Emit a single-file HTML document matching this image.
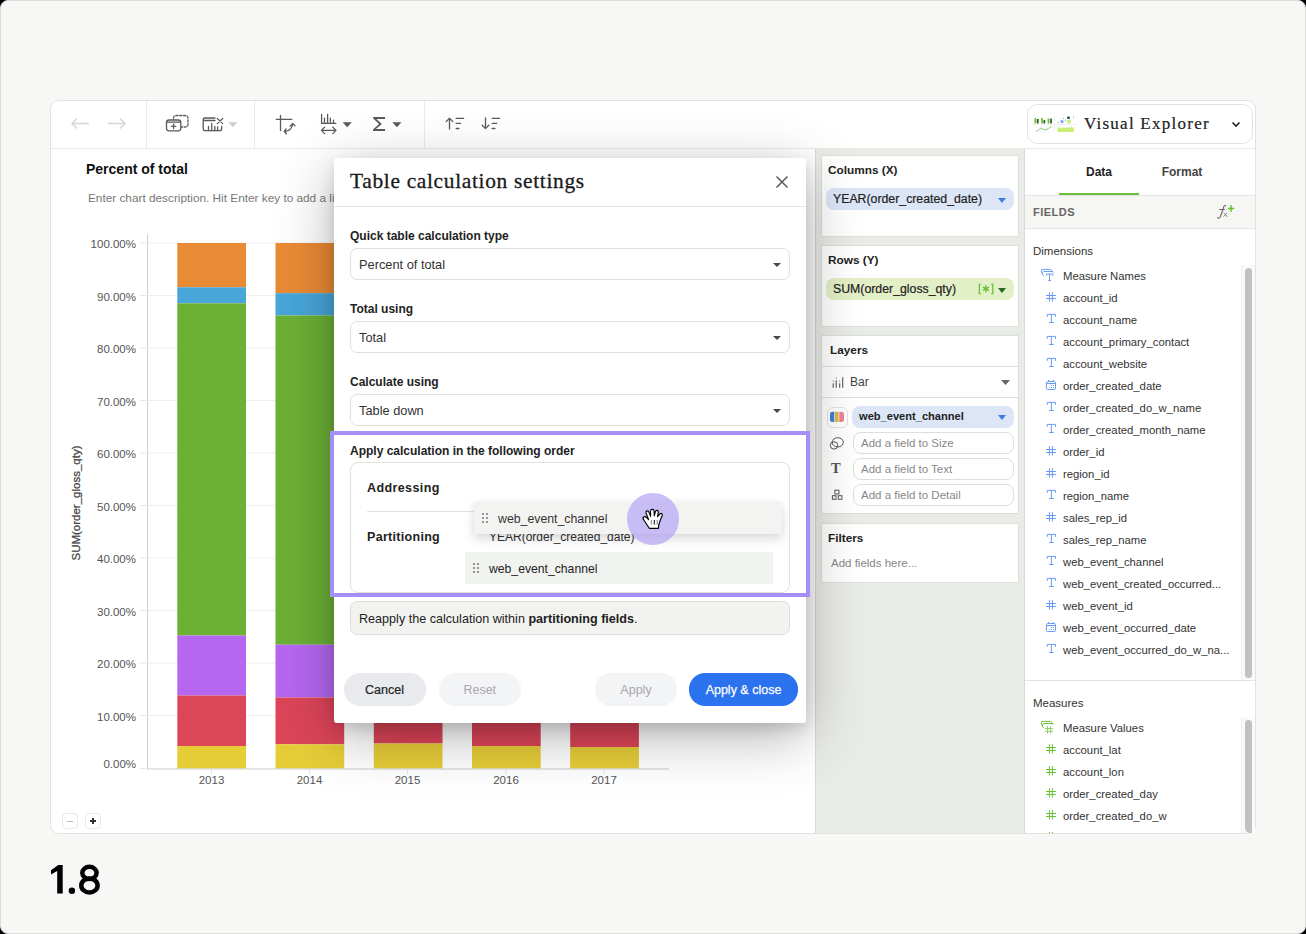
<!DOCTYPE html>
<html><head><meta charset="utf-8">
<style>
*{box-sizing:border-box;margin:0;padding:0}
html,body{width:1306px;height:934px;overflow:hidden;background:#000;font-family:"Liberation Sans",sans-serif;color:#222}
.a{position:absolute}
.t{position:absolute;white-space:nowrap;line-height:1}
#frame{position:absolute;left:0;top:0;width:1306px;height:934px;background:#f7f7f5;border:1px solid #dcdedb;border-radius:8px;overflow:hidden}
svg{position:absolute;overflow:visible}
.tri{position:absolute;width:0;height:0;border-left:4.5px solid transparent;border-right:4.5px solid transparent;border-top:5px solid #555}
.dim{font-size:11.3px;color:#333}
.ic{position:absolute;left:1046px}
</style></head><body>
<div id="frame"></div>

<!-- APP WINDOW -->
<div class="a" style="left:50px;top:100px;width:1206px;height:734px;background:#fff;border:1px solid #e1e3e0;border-radius:9px"></div>
<!-- toolbar bottom border -->
<div class="a" style="left:51px;top:148px;width:1204px;height:1px;background:#e8eae6"></div>
<div class="a" style="left:146px;top:101px;width:1px;height:47px;background:#e8eae6"></div>
<div class="a" style="left:254px;top:101px;width:1px;height:47px;background:#e8eae6"></div>
<div class="a" style="left:424px;top:101px;width:1px;height:47px;background:#e8eae6"></div>

<!-- shelf panel -->
<div class="a" style="left:815px;top:149px;width:210px;height:684px;background:#e9ebe6;border-left:1px solid #d8dad5;border-right:1px solid #d8dad5"></div>

<!-- toolbar icons -->
<svg style="left:0;top:0" width="1306" height="150" viewBox="0 0 1306 150" fill="none" stroke-linecap="round" stroke-linejoin="round">
  <g stroke="#d6d6d4" stroke-width="1.6">
    <path d="M72.5 123.5H88.5M76.5 119L72 123.5L76.5 128"/>
    <path d="M108.5 123.5H124.5M120.5 119L125 123.5L120.5 128"/>
  </g>
  <g stroke="#5a5a5a" stroke-width="1.3">
    <path d="M173.5 122V118.5Q173.5 115.5 176.5 115.5H185Q188 115.5 188 118.5V124Q188 127 185 127H181" stroke-dasharray="2.2 1.6"/>
    <rect x="166.5" y="120" width="14.3" height="10.8" rx="2.5" fill="#fff"/>
    <path d="M167 122.2H180.5M173.6 124V128.5M171.3 126.3H175.9"/>
    <path d="M215 118H204.5Q203.2 118 203.2 120.5V128.5Q203.2 130.7 205.5 130.7H219.5Q221.7 130.7 221.7 128.5V126.3"/>
    <path d="M204 120.5H215M208.5 126.5V130.5M211.7 123.5V130.5M214.8 126.5V130.5M217.6 127V130.5"/>
    <path d="M217.3 118.5L222.7 123.6M222.7 118.5L217.3 123.6"/>
    <path d="M280.5 115.5V130.5M276.2 119.3H291.8"/>
    <path d="M284.6 131.5Q291.8 131 292.6 123.8M290.2 126.1L292.6 123.6L294.9 125.7M286.2 128.9L284.3 131.5L286.4 133.8"/>
    <path d="M321.6 114.3V123.4H335.8M324.5 118.2V123.4M327.6 114.3V123.4M330.4 118.2V123.4M333.5 120.2V123.4"/>
    <path d="M321.5 130.4H335.8M324.6 127.2L321.4 130.4L324.6 133.6M332.8 127.2L336 130.4L332.8 133.6"/>
  </g>
  <path d="M373.2 117.1H385.1V118.9H376.4L381.9 124L375.9 129.1H385.1V130.9H373V129.5L379.1 124L373.2 118.6Z" fill="#5a5a5a"/>
  <path d="M228.3 122.2H237.5L232.9 127.2Z" fill="#cdcdcd"/>
  <path d="M342.6 122.2H351.8L347.2 127.2Z" fill="#5a5a5a"/>
  <path d="M392.3 122.2H401.5L396.9 127.2Z" fill="#5a5a5a"/>
  <g stroke="#5a5a5a" stroke-width="1.3">
    <path d="M449.5 129V118.3M446.2 121.6L449.5 118.2L452.8 121.6"/>
    <path d="M456.2 118.4H463.6M456.2 123.4H460.6M456.2 128.5H458.9"/>
    <path d="M485.5 118V128.6M482.2 125.3L485.5 128.6L488.8 125.3"/>
    <path d="M492.2 118.4H499.6M492.2 123.4H496.6M492.2 128.5H494.9"/>
  </g>
</svg>
<!-- Visual Explorer -->
<div class="a" style="left:1027px;top:104px;width:226px;height:40px;border:1px solid #e3e4e0;border-radius:10px;background:#fff"></div>
<svg style="left:0;top:0" width="1306" height="150" viewBox="0 0 1306 150">
  <g fill="#6cc02a"><rect x="1034.5" y="118" width="1.8" height="5.6" rx="0.5"/><rect x="1041.2" y="118" width="1.8" height="5.6" rx="0.5"/><rect x="1047.6" y="118.6" width="1.8" height="5" rx="0.5"/></g>
  <g fill="#1d5a2a"><rect x="1036.9" y="119" width="1.7" height="4.6" rx="0.5"/><rect x="1043.5" y="120" width="1.7" height="3.6" rx="0.5"/><rect x="1050.2" y="118.6" width="1.7" height="5" rx="0.5"/></g>
  <path d="M1032 124.7H1077" stroke="#ececec" stroke-width="0.9"/>
  <path d="M1054.5 116V132" stroke="#ededed" stroke-width="0.8"/>
  <path d="M1036 131.5L1041.3 128.3L1043.8 129.5L1046 129.8L1051.5 126.6" stroke="#79c043" stroke-width="0.9" fill="none"/>
  <path d="M1037 131.8L1041.3 126.5L1045.8 131.6L1051 126" stroke="#cfe0fb" stroke-width="0.6" fill="none"/>
  <g fill="#6f9ef0"><circle cx="1062" cy="121.5" r="1.5"/><circle cx="1058.5" cy="122.5" r="0.6"/><circle cx="1063.5" cy="118.3" r="0.6"/><circle cx="1065.5" cy="120.2" r="0.6"/><circle cx="1073.5" cy="117.2" r="0.6"/></g>
  <rect x="1067.2" y="116.6" width="2.6" height="2.4" rx="0.5" fill="#1d5a2a"/>
  <rect x="1067.2" y="120" width="3.6" height="3.4" rx="0.8" fill="#c8ef74"/>
  <path d="M1057.5 132V127.5L1058.3 126.8L1059 128.5L1060 127L1061 128.5L1062 127.2L1062.8 128.2L1063.8 127L1064.8 128.6L1065.8 126.9L1066.8 128.4L1067.8 127.1L1068.7 128.3L1069.7 126.8L1070.7 127.8L1071.7 126.6L1072.7 127.9L1074 127V132Z" fill="#c8ef74"/>
  <path d="M1232.5 122.5L1236 126L1239.5 122.5" stroke="#222" stroke-width="1.6" fill="none"/>
</svg>
<div class="t" style="left:1084px;top:114.7px;font-family:'Liberation Serif',serif;font-size:17px;color:#222;letter-spacing:1.25px;-webkit-text-stroke:0.2px #222">Visual Explorer</div>

<!-- CHART -->
<div class="t" style="left:86px;top:162px;font-size:14px;font-weight:bold;color:#111">Percent of total</div>
<div class="t" style="left:88px;top:193px;font-size:11.8px;color:#777">Enter chart description. Hit Enter key to add a line break.</div>
<svg style="left:0;top:0" width="1306" height="850" viewBox="0 0 1306 850">
  <g stroke="#efefef" stroke-width="1">
    <path d="M148 243H668M148 295.5H668M148 348H668M148 400.5H668M148 453H668M148 505.5H668M148 558H668M148 610.5H668M148 663H668M148 715.5H668"/>
  </g>
  <g stroke="#e4e4e4" stroke-width="1">
    <path d="M140 243H146M140 295.5H146M140 348H146M140 400.5H146M140 453H146M140 505.5H146M140 558H146M140 610.5H146M140 663H146M140 715.5H146M140 768.5H146"/>
  </g>
  <path d="M147.5 234V769" stroke="#d0d0d0" stroke-width="1"/>
  <g>
    <!-- 2013 -->
    <rect x="177.3" y="243" width="68.7" height="44.3" fill="#e98b35"/>
    <rect x="177.3" y="287.3" width="68.7" height="16" fill="#48a6d9"/>
    <rect x="177.3" y="303.3" width="68.7" height="332.2" fill="#6cb036"/>
    <rect x="177.3" y="635.5" width="68.7" height="60" fill="#b667f1"/>
    <rect x="177.3" y="695.5" width="68.7" height="50.5" fill="#dd4559"/>
    <rect x="177.3" y="746" width="68.7" height="22.5" fill="#e6cd38"/>
    <!-- 2014 -->
    <rect x="275.5" y="243" width="68.7" height="50.2" fill="#e98b35"/>
    <rect x="275.5" y="293.2" width="68.7" height="22.3" fill="#48a6d9"/>
    <rect x="275.5" y="315.5" width="68.7" height="329.2" fill="#6cb036"/>
    <rect x="275.5" y="644.7" width="68.7" height="52.8" fill="#b667f1"/>
    <rect x="275.5" y="697.5" width="68.7" height="46.8" fill="#dd4559"/>
    <rect x="275.5" y="744.3" width="68.7" height="24.2" fill="#e6cd38"/>
    <!-- 2015 -->
    <rect x="373.8" y="243" width="68.7" height="400" fill="#e98b35"/>
    <rect x="373.8" y="640" width="68.7" height="103.5" fill="#dd4559"/>
    <rect x="373.8" y="743.5" width="68.7" height="25" fill="#e6cd38"/>
    <!-- 2016 -->
    <rect x="472" y="243" width="68.7" height="400" fill="#e98b35"/>
    <rect x="472" y="640" width="68.7" height="106" fill="#dd4559"/>
    <rect x="472" y="746" width="68.7" height="22.5" fill="#e6cd38"/>
    <!-- 2017 -->
    <rect x="570.2" y="243" width="68.7" height="400" fill="#e98b35"/>
    <rect x="570.2" y="640" width="68.7" height="107" fill="#dd4559"/>
    <rect x="570.2" y="747" width="68.7" height="21.5" fill="#e6cd38"/>
  </g>
  <path d="M147 769H669" stroke="#cccccc" stroke-width="1.2"/>
  <g stroke="#e6e6e6" stroke-width="1"><path d="M211.5 770V775M309.5 770V775M407.5 770V775M506 770V775M604 770V775"/></g>
</svg>
<div class="t" style="left:0;top:238px;width:136px;text-align:right;font-size:11.5px;color:#555;line-height:12px">100.00%</div>
<div class="t" style="left:0;top:290.5px;width:136px;text-align:right;font-size:11.5px;color:#555;line-height:12px">90.00%</div>
<div class="t" style="left:0;top:343px;width:136px;text-align:right;font-size:11.5px;color:#555;line-height:12px">80.00%</div>
<div class="t" style="left:0;top:395.5px;width:136px;text-align:right;font-size:11.5px;color:#555;line-height:12px">70.00%</div>
<div class="t" style="left:0;top:448px;width:136px;text-align:right;font-size:11.5px;color:#555;line-height:12px">60.00%</div>
<div class="t" style="left:0;top:500.5px;width:136px;text-align:right;font-size:11.5px;color:#555;line-height:12px">50.00%</div>
<div class="t" style="left:0;top:553px;width:136px;text-align:right;font-size:11.5px;color:#555;line-height:12px">40.00%</div>
<div class="t" style="left:0;top:605.5px;width:136px;text-align:right;font-size:11.5px;color:#555;line-height:12px">30.00%</div>
<div class="t" style="left:0;top:658px;width:136px;text-align:right;font-size:11.5px;color:#555;line-height:12px">20.00%</div>
<div class="t" style="left:0;top:710.5px;width:136px;text-align:right;font-size:11.5px;color:#555;line-height:12px">10.00%</div>
<div class="t" style="left:0;top:758px;width:136px;text-align:right;font-size:11.5px;color:#555;line-height:12px">0.00%</div>
<div class="t" style="left:161.5px;top:774px;width:100px;text-align:center;font-size:11.5px;color:#555;line-height:12px">2013</div>
<div class="t" style="left:259.5px;top:774px;width:100px;text-align:center;font-size:11.5px;color:#555;line-height:12px">2014</div>
<div class="t" style="left:357.5px;top:774px;width:100px;text-align:center;font-size:11.5px;color:#555;line-height:12px">2015</div>
<div class="t" style="left:456px;top:774px;width:100px;text-align:center;font-size:11.5px;color:#555;line-height:12px">2016</div>
<div class="t" style="left:554px;top:774px;width:100px;text-align:center;font-size:11.5px;color:#555;line-height:12px">2017</div>
<div class="t" style="left:6px;top:497px;width:140px;text-align:center;font-size:11.5px;color:#444;line-height:12px;transform:rotate(-90deg);font-weight:normal;-webkit-text-stroke:0.25px #444">SUM(order_gloss_qty)</div>
<!-- zoom buttons -->
<div class="a" style="left:62px;top:813px;width:16px;height:16px;border:1px solid #e9ebe7;border-radius:4px;background:#fff"></div>
<div class="a" style="left:67px;top:820.5px;width:6px;height:1.3px;background:#bbb"></div>
<div class="a" style="left:85px;top:813px;width:16px;height:16px;border:1px solid #e9ebe7;border-radius:4px;background:#fff"></div>
<div class="a" style="left:90px;top:820.3px;width:6px;height:2px;background:#333"></div>
<div class="a" style="left:92px;top:818.3px;width:2px;height:6px;background:#333"></div>

<div id="chartlayer"></div>
<!-- SHELF -->
<div class="a" style="left:821px;top:155px;width:198px;height:82px;background:#fff;border:1px solid #dddfda"></div>
<div class="t" style="left:828px;top:165px;font-size:11.8px;font-weight:bold;color:#222">Columns (X)</div>
<div class="a" style="left:826px;top:188px;width:188px;height:22px;background:#dce6f7;border-radius:8px"></div>
<div class="t" style="left:833px;top:193px;font-size:12.3px;color:#222;-webkit-text-stroke:0.2px #222">YEAR(order_created_date)</div>
<div class="tri" style="left:997.5px;top:197.5px;border-top-color:#3f7ddb"></div>

<div class="a" style="left:821px;top:245px;width:198px;height:82px;background:#fff;border:1px solid #dddfda"></div>
<div class="t" style="left:828px;top:255px;font-size:11.8px;font-weight:bold;color:#222">Rows (Y)</div>
<div class="a" style="left:826px;top:278px;width:188px;height:22px;background:#e3efc6;border-radius:8px"></div>
<div class="t" style="left:833px;top:283px;font-size:12.3px;color:#222;-webkit-text-stroke:0.2px #222">SUM(order_gloss_qty)</div>
<svg style="left:0;top:0" width="1306" height="400" viewBox="0 0 1306 400" fill="none" stroke="#62c02e"><path d="M980.8 284.3H979.3V293.6H980.8M991.3 284.3H992.8V293.6H991.3" stroke-width="1.2"/><path d="M985.9 285.2V292.2M982.9 287L988.9 290.4M988.9 287L982.9 290.4" stroke-width="1.4"/></svg>
<div class="tri" style="left:998px;top:287.5px;border-top-color:#236b25"></div>

<div class="a" style="left:821px;top:335px;width:198px;height:179px;background:#fff;border:1px solid #dddfda"></div>
<div class="t" style="left:830px;top:345px;font-size:11.8px;font-weight:bold;color:#222">Layers</div>
<div class="a" style="left:822px;top:366px;width:196px;height:1px;background:#dddfda"></div>
<svg style="left:0;top:0" width="1306" height="600" viewBox="0 0 1306 600" fill="none">
  <g stroke="#555" stroke-width="1.1"><path d="M833.2 383.3V387.8M836.2 380.3V387.8M839.7 383.3V387.8M842.7 377.3V387.8"/></g>
  <g fill="#555"><circle cx="833.2" cy="381" r="0.6"/><circle cx="836.2" cy="378" r="0.6"/><circle cx="839.7" cy="381" r="0.6"/></g>
  <path d="M1001 380H1010L1005.5 385Z" fill="#666"/>
</svg>
<div class="t" style="left:850px;top:376px;font-size:12px;color:#444">Bar</div><div class="t" style="left:831px;top:461px;font-family:'Liberation Serif',serif;font-weight:bold;font-size:14.5px;color:#555">T</div>
<div class="a" style="left:822px;top:397px;width:196px;height:1px;background:#dddfda"></div>
<!-- color icon -->
<div class="a" style="left:827px;top:407px;width:21px;height:21px;border:1px solid #e3e3e0;border-radius:6px;background:#fff"></div>
<svg style="left:0;top:0" width="1306" height="600" viewBox="0 0 1306 600">
  <path d="M832.5 411.8H834.3V422H832.5Q830 422 830 419.5V414.3Q830 411.8 832.5 411.8Z" fill="#3f7ddb"/>
  <rect x="835" y="411.8" width="3.6" height="10.2" fill="#dfb93e"/>
  <path d="M839.3 411.8H841.5Q844 411.8 844 414.3V419.5Q844 422 841.5 422H839.3Z" fill="#f0829a"/>
</svg>
<div class="a" style="left:852px;top:406px;width:162px;height:21.5px;background:#dce6f7;border-radius:8px"></div>
<div class="t" style="left:859px;top:411px;font-size:11.1px;font-weight:bold;color:#222">web_event_channel</div>
<div class="tri" style="left:997.5px;top:415px;border-top-color:#3f7ddb"></div>
<!-- size/text/detail -->
<div class="a" style="left:852.5px;top:432px;width:161.5px;height:21.5px;border:1px solid #dedfdc;border-radius:8px;background:#fff"></div>
<div class="t" style="left:861px;top:438px;font-size:11.5px;color:#888">Add a field to Size</div>
<div class="a" style="left:852.5px;top:458px;width:161.5px;height:21.5px;border:1px solid #dedfdc;border-radius:8px;background:#fff"></div>
<div class="t" style="left:861px;top:464px;font-size:11.5px;color:#888">Add a field to Text</div>
<div class="a" style="left:852.5px;top:484px;width:161.5px;height:21.5px;border:1px solid #dedfdc;border-radius:8px;background:#fff"></div>
<div class="t" style="left:861px;top:490px;font-size:11.5px;color:#888">Add a field to Detail</div>
<svg style="left:0;top:0" width="1306" height="600" viewBox="0 0 1306 600" fill="none" stroke="#555" stroke-width="1">
  <ellipse cx="837.7" cy="442.3" rx="5.6" ry="4.6"/>
  <circle cx="834" cy="445.4" r="3.7"/>
  <rect x="834.9" y="490.2" width="4" height="3.8"/><rect x="832.4" y="495.7" width="3.6" height="3.6"/><rect x="838.3" y="495.7" width="3.6" height="3.6"/>
</svg>

<div class="a" style="left:821px;top:523px;width:198px;height:60px;background:#fff;border:1px solid #dddfda"></div>
<div class="t" style="left:828px;top:532.5px;font-size:11.8px;font-weight:bold;color:#222">Filters</div>
<div class="t" style="left:831px;top:558px;font-size:11.5px;color:#888">Add fields here...</div>

<div id="shelflayer"></div>
<!-- DATA PANEL -->
<div class="t" style="left:1060px;top:165.5px;width:78px;text-align:center;font-size:12px;font-weight:bold;color:#222">Data</div>
<div class="t" style="left:1142px;top:165.5px;width:80px;text-align:center;font-size:12px;font-weight:bold;color:#444">Format</div>
<div class="a" style="left:1059px;top:192.5px;width:80px;height:2px;background:#6cbf3a"></div>
<div class="a" style="left:1025px;top:194.5px;width:230px;height:34px;background:#f6f6f4;border-top:1px solid #e6e7e3;border-bottom:1px solid #e6e7e3"></div>
<div class="t" style="left:1033px;top:207px;font-size:11px;font-weight:bold;color:#666;letter-spacing:0.5px">FIELDS</div>

<svg style="left:0;top:0" width="1306" height="850" viewBox="0 0 1306 850" fill="none">
  <path d="M1231 205.2V211.8M1227.8 208.5H1234.3" stroke="#62bf2e" stroke-width="1.5"/>
  <path d="M1217.4 217.2Q1218.6 219.3 1220.3 217L1223.9 206.5Q1224.8 204.8 1226.1 206" stroke="#666" stroke-width="1.1"/>
  <path d="M1219.4 209.5H1224.8" stroke="#666" stroke-width="1"/>
  <path d="M1223.6 212.7L1227.6 216.9M1227 212.9L1223.6 216.6" stroke="#777" stroke-width="0.9"/>
</svg>
<div class="t" style="left:1033px;top:245.5px;font-size:11.5px;color:#333">Dimensions</div>
<!-- dims list -->
<div class="a" style="left:1241px;top:265px;width:14px;height:416px;background:#fafafa;border-left:1px solid #efefef"></div>
<div class="a" style="left:1245px;top:268px;width:7px;height:410px;background:#c1c1c1;border-radius:4px"></div>
<div class="t dim" style="left:1063px;top:270.5px">Measure Names</div>
<div class="t dim" style="left:1063px;top:292.5px">account_id</div>
<div class="t dim" style="left:1063px;top:314.5px">account_name</div>
<div class="t dim" style="left:1063px;top:336.5px">account_primary_contact</div>
<div class="t dim" style="left:1063px;top:358.5px">account_website</div>
<div class="t dim" style="left:1063px;top:380.5px">order_created_date</div>
<div class="t dim" style="left:1063px;top:402.5px">order_created_do_w_name</div>
<div class="t dim" style="left:1063px;top:424.5px">order_created_month_name</div>
<div class="t dim" style="left:1063px;top:446.5px">order_id</div>
<div class="t dim" style="left:1063px;top:468.5px">region_id</div>
<div class="t dim" style="left:1063px;top:490.5px">region_name</div>
<div class="t dim" style="left:1063px;top:512.5px">sales_rep_id</div>
<div class="t dim" style="left:1063px;top:534.5px">sales_rep_name</div>
<div class="t dim" style="left:1063px;top:556.5px">web_event_channel</div>
<div class="t dim" style="left:1063px;top:578.5px">web_event_created_occurred...</div>
<div class="t dim" style="left:1063px;top:600.5px">web_event_id</div>
<div class="t dim" style="left:1063px;top:622.5px">web_event_occurred_date</div>
<div class="t dim" style="left:1063px;top:644.5px">web_event_occurred_do_w_na...</div>
<div class="a" style="left:1025px;top:680px;width:230px;height:1px;background:#e3e4e0"></div>
<div class="t" style="left:1033px;top:697.5px;font-size:11.5px;color:#333">Measures</div>
<div class="a" style="left:1241px;top:717px;width:14px;height:116px;background:#fafafa;border-left:1px solid #efefef"></div>
<div class="a" style="left:1245px;top:720px;width:7px;height:113px;background:#c1c1c1;border-radius:4px 4px 0 6px"></div>
<div class="t dim" style="left:1063px;top:722.5px">Measure Values</div>
<div class="t dim" style="left:1063px;top:744.5px">account_lat</div>
<div class="t dim" style="left:1063px;top:766.5px">account_lon</div>
<div class="t dim" style="left:1063px;top:788.5px">order_created_day</div>
<div class="t dim" style="left:1063px;top:810.5px">order_created_do_w</div>
<svg style="left:0;top:0" width="1306" height="850" viewBox="0 0 1306 850" fill="none" stroke-width="1">
  
  <g stroke="#6b9bef">
    <path d="M1043 274Q1040.2 272 1041.8 269.4H1050.6L1053.3 272.3M1043.8 275.8L1042.2 274.3Q1041.5 273 1043.8 271.5H1051.8L1053.3 272.3M1046.5 275.6V274H1052.8V275.6M1049.6 274V280.5M1048.2 280.5H1051"/>
    <g transform="translate(1051 298)"><path d="M-1.6 -5.9V3.6M1.4 -5.9V3.6M-5 -2.5H5M-5 0.5H5"/></g>
    <g transform="translate(1051 320)"><path d="M-3.7 -3.2V-5.6H4.5V-3.2M0.4 -5.6V2.5M-1.9 2.5H2.7"/></g>
    <g transform="translate(1051 342)"><path d="M-3.7 -3.2V-5.6H4.5V-3.2M0.4 -5.6V2.5M-1.9 2.5H2.7"/></g>
    <g transform="translate(1051 364)"><path d="M-3.7 -3.2V-5.6H4.5V-3.2M0.4 -5.6V2.5M-1.9 2.5H2.7"/></g>
    <g transform="translate(1051 386)"><rect x="-4.6" y="-4.5" width="9.1" height="8" rx="1.3"/><path d="M-4.6 -2.5H4.5M-2.5 -6V-4.5M2.5 -6V-4.5"/><g fill="#6b9bef" stroke="none"><circle cx="0.5" cy="-0.5" r="0.6"/><circle cx="2.5" cy="-0.5" r="0.6"/><circle cx="-1.5" cy="1.5" r="0.6"/><circle cx="0.5" cy="1.5" r="0.6"/><circle cx="2.5" cy="1.5" r="0.6"/></g></g>
    <g transform="translate(1051 408)"><path d="M-3.7 -3.2V-5.6H4.5V-3.2M0.4 -5.6V2.5M-1.9 2.5H2.7"/></g>
    <g transform="translate(1051 430)"><path d="M-3.7 -3.2V-5.6H4.5V-3.2M0.4 -5.6V2.5M-1.9 2.5H2.7"/></g>
    <g transform="translate(1051 452)"><path d="M-1.6 -5.9V3.6M1.4 -5.9V3.6M-5 -2.5H5M-5 0.5H5"/></g>
    <g transform="translate(1051 474)"><path d="M-1.6 -5.9V3.6M1.4 -5.9V3.6M-5 -2.5H5M-5 0.5H5"/></g>
    <g transform="translate(1051 496)"><path d="M-3.7 -3.2V-5.6H4.5V-3.2M0.4 -5.6V2.5M-1.9 2.5H2.7"/></g>
    <g transform="translate(1051 518)"><path d="M-1.6 -5.9V3.6M1.4 -5.9V3.6M-5 -2.5H5M-5 0.5H5"/></g>
    <g transform="translate(1051 540)"><path d="M-3.7 -3.2V-5.6H4.5V-3.2M0.4 -5.6V2.5M-1.9 2.5H2.7"/></g>
    <g transform="translate(1051 562)"><path d="M-3.7 -3.2V-5.6H4.5V-3.2M0.4 -5.6V2.5M-1.9 2.5H2.7"/></g>
    <g transform="translate(1051 584)"><path d="M-3.7 -3.2V-5.6H4.5V-3.2M0.4 -5.6V2.5M-1.9 2.5H2.7"/></g>
    <g transform="translate(1051 606)"><path d="M-1.6 -5.9V3.6M1.4 -5.9V3.6M-5 -2.5H5M-5 0.5H5"/></g>
    <g transform="translate(1051 628)"><rect x="-4.6" y="-4.5" width="9.1" height="8" rx="1.3"/><path d="M-4.6 -2.5H4.5M-2.5 -6V-4.5M2.5 -6V-4.5"/><g fill="#6b9bef" stroke="none"><circle cx="0.5" cy="-0.5" r="0.6"/><circle cx="2.5" cy="-0.5" r="0.6"/><circle cx="-1.5" cy="1.5" r="0.6"/><circle cx="0.5" cy="1.5" r="0.6"/><circle cx="2.5" cy="1.5" r="0.6"/></g></g>
    <g transform="translate(1051 650)"><path d="M-3.7 -3.2V-5.6H4.5V-3.2M0.4 -5.6V2.5M-1.9 2.5H2.7"/></g>
  </g>
  <g stroke="#6cc13a">
    <path transform="translate(0 452)" d="M1043 274Q1040.2 272 1041.8 269.4H1050.6L1053.3 272.3M1043.8 275.8L1042.2 274.3Q1041.5 273 1043.8 271.5H1051.8L1053.3 272.3"/>
    <path d="M1047.6 726V733.8M1050.6 726V733.8M1045 728.5H1053M1045 731.3H1053" stroke="#8fd063"/>
    <g transform="translate(1051 750)"><path d="M-1.6 -5.9V3.6M1.4 -5.9V3.6M-5 -2.5H5M-5 0.5H5"/></g>
    <g transform="translate(1051 772)"><path d="M-1.6 -5.9V3.6M1.4 -5.9V3.6M-5 -2.5H5M-5 0.5H5"/></g>
    <g transform="translate(1051 794)"><path d="M-1.6 -5.9V3.6M1.4 -5.9V3.6M-5 -2.5H5M-5 0.5H5"/></g>
    <g transform="translate(1051 816)"><path d="M-1.6 -5.9V3.6M1.4 -5.9V3.6M-5 -2.5H5M-5 0.5H5"/></g>
    <path d="M1049.4 832V833.2M1052.4 832V833.2"/>
  </g>
</svg>

<div id="datalayer"></div>
<!-- MODAL -->
<div class="a" style="left:334px;top:158px;width:472px;height:565px;background:#fff;border-radius:3px;box-shadow:0 6px 14px rgba(0,0,0,0.12),0 14px 56px rgba(0,0,0,0.3)"></div>
<div class="t" style="left:350px;top:170.7px;font-family:'Liberation Serif',serif;font-size:21.4px;color:#1a1a1a;letter-spacing:0.68px;-webkit-text-stroke:0.3px #1a1a1a">Table calculation settings</div>
<svg style="left:0;top:0" width="1306" height="934" viewBox="0 0 1306 934" fill="none">
  <path d="M776.5 176.5L787.5 187.5M787.5 176.5L776.5 187.5" stroke="#5e5e5e" stroke-width="1.6"/>
</svg>
<div class="a" style="left:334px;top:206px;width:472px;height:1px;background:#e6e7e3"></div>

<div class="t" style="left:350px;top:229.5px;font-size:12px;font-weight:bold;color:#222">Quick table calculation type</div>
<div class="a" style="left:350px;top:248px;width:440px;height:32px;border:1px solid #dfe0dc;border-radius:7px;background:#fff"></div>
<div class="t" style="left:359px;top:259px;font-size:12.8px;color:#333">Percent of total</div>
<div class="tri" style="left:772.8px;top:262.5px;border-top-color:#484848;border-left-width:4px;border-right-width:4px;border-top-width:4.6px"></div>

<div class="t" style="left:350px;top:302.5px;font-size:12px;font-weight:bold;color:#222">Total using</div>
<div class="a" style="left:350px;top:321px;width:440px;height:32px;border:1px solid #dfe0dc;border-radius:7px;background:#fff"></div>
<div class="t" style="left:359px;top:332px;font-size:12.8px;color:#333">Total</div>
<div class="tri" style="left:772.8px;top:335.5px;border-top-color:#484848;border-left-width:4px;border-right-width:4px;border-top-width:4.6px"></div>

<div class="t" style="left:350px;top:375.5px;font-size:12px;font-weight:bold;color:#222">Calculate using</div>
<div class="a" style="left:350px;top:394px;width:440px;height:32px;border:1px solid #dfe0dc;border-radius:7px;background:#fff"></div>
<div class="t" style="left:359px;top:405px;font-size:12.8px;color:#333">Table down</div>
<div class="tri" style="left:772.8px;top:408.5px;border-top-color:#484848;border-left-width:4px;border-right-width:4px;border-top-width:4.6px"></div>

<!-- order section -->
<div class="t" style="left:350px;top:444.5px;font-size:12px;font-weight:bold;color:#222">Apply calculation in the following order</div>
<div class="a" style="left:350px;top:462px;width:440px;height:131px;border:1px solid #e0e1dd;border-radius:8px;background:#fff"></div>
<div class="t" style="left:367px;top:482px;font-size:12.5px;font-weight:bold;color:#222;letter-spacing:0.4px">Addressing</div>
<div class="a" style="left:367px;top:510.5px;width:110px;height:1px;background:#e3e4e0"></div>
<div class="t" style="left:367px;top:531px;font-size:12.5px;font-weight:bold;color:#222;letter-spacing:0.3px">Partitioning</div>
<div class="t" style="left:489px;top:531px;font-size:12px;color:#333">YEAR(order_created_date)</div>
<div class="a" style="left:465px;top:552px;width:308px;height:32px;background:#f1f3f0"></div>
<svg style="left:0;top:0" width="1306" height="934" viewBox="0 0 1306 934">
  <g fill="#777"><circle cx="474" cy="564" r="1"/><circle cx="478" cy="564" r="1"/><circle cx="474" cy="568" r="1"/><circle cx="478" cy="568" r="1"/><circle cx="474" cy="572" r="1"/><circle cx="478" cy="572" r="1"/></g>
</svg>
<div class="t" style="left:489px;top:563px;font-size:12.2px;color:#222">web_event_channel</div>

<!-- dragged item -->
<div class="a" style="left:474px;top:501.5px;width:308px;height:32px;background:#f3f4f1;box-shadow:0 5px 12px rgba(0,0,0,0.14),0 0 6px rgba(0,0,0,0.04)"></div>
<svg style="left:0;top:0" width="1306" height="934" viewBox="0 0 1306 934">
  <g fill="#777"><circle cx="483" cy="514" r="1"/><circle cx="487" cy="514" r="1"/><circle cx="483" cy="518" r="1"/><circle cx="487" cy="518" r="1"/><circle cx="483" cy="522" r="1"/><circle cx="487" cy="522" r="1"/></g>
</svg>
<div class="t" style="left:498px;top:513px;font-size:12.3px;color:#333">web_event_channel</div>

<!-- purple highlight -->
<div class="a" style="left:330px;top:431px;width:480px;height:166px;border:4px solid #a58ef8"></div>

<!-- info -->
<div class="a" style="left:350px;top:601px;width:440px;height:33.5px;border:1px solid #dedfdb;border-radius:7px;background:#f2f3f0"></div>
<div class="t" style="left:359px;top:613px;font-size:12.6px;color:#222">Reapply the calculation within <b>partitioning fields</b>.</div>

<!-- buttons -->
<div class="a" style="left:343.5px;top:673.3px;width:82px;height:32.5px;border-radius:16px;background:#e9eaee"></div>
<div class="t" style="left:343.5px;top:684px;width:82px;text-align:center;font-size:12.5px;color:#222;-webkit-text-stroke:0.2px #222">Cancel</div>
<div class="a" style="left:438.5px;top:673.3px;width:82.5px;height:32.5px;border-radius:16px;background:#f3f4f6"></div>
<div class="t" style="left:438.5px;top:684px;width:82.5px;text-align:center;font-size:12.5px;color:#a8a8ab">Reset</div>
<div class="a" style="left:595px;top:673.3px;width:82px;height:32.5px;border-radius:16px;background:#f3f4f6"></div>
<div class="t" style="left:595px;top:684px;width:82px;text-align:center;font-size:12.5px;color:#a8a8ab">Apply</div>
<div class="a" style="left:689px;top:673.3px;width:109px;height:32.5px;border-radius:16px;background:#2a72ee"></div>
<div class="t" style="left:689px;top:684px;width:109px;text-align:center;font-size:12.5px;color:#fff;-webkit-text-stroke:0.25px #fff">Apply &amp; close</div>

<!-- cursor -->
<div class="a" style="left:627.3px;top:493.2px;width:51.4px;height:51.4px;border-radius:50%;background:rgba(178,160,245,0.68)"></div>
<svg style="left:0;top:0" width="1306" height="934" viewBox="0 0 1306 934">
  <path d="M649.3 528.3L643.8 520Q642.3 517.8 643.6 516.9Q645 516 646.8 517.8L648.6 519.6L646.1 513.2Q645.6 511.3 646.9 510.9Q648.3 510.5 649 512.2L650.6 516.3L650.5 511.2Q650.5 509.3 652.3 509.3Q654 509.3 654.1 511.2L654.3 515.8L655.3 511.9Q655.8 510.2 657.2 510.4Q658.6 510.7 658.3 512.4L657.6 516.6L659.6 514.2Q660.7 513 661.8 513.7Q662.8 514.5 662.1 515.8L659.8 521.5Q659 524 658.6 526L658.5 528.3Z" fill="#fff" stroke="#000" stroke-width="1.15" stroke-linejoin="round"/>
  <path d="M651.3 520V524.6M657.2 520V524.6" stroke="#777" stroke-width="1"/>
  <path d="M654.3 520V524.6" stroke="#000" stroke-width="1"/>
</svg>

<div id="modallayer"></div>

<svg style="left:0;top:0" width="1306" height="934" viewBox="0 0 1306 934">
  <path d="M58.3 865.1H62.7V893.6H57.2V870.9L51 874.5V870.2Z" fill="#000"/>
  <circle cx="71.9" cy="890.8" r="3.2" fill="#000"/>
  <g fill="none" stroke="#000" stroke-width="4.5">
    <ellipse cx="89.45" cy="872.95" rx="7.15" ry="6.1"/>
    <ellipse cx="89.45" cy="885.45" rx="8.15" ry="7"/>
  </g>
</svg>
</body></html>
